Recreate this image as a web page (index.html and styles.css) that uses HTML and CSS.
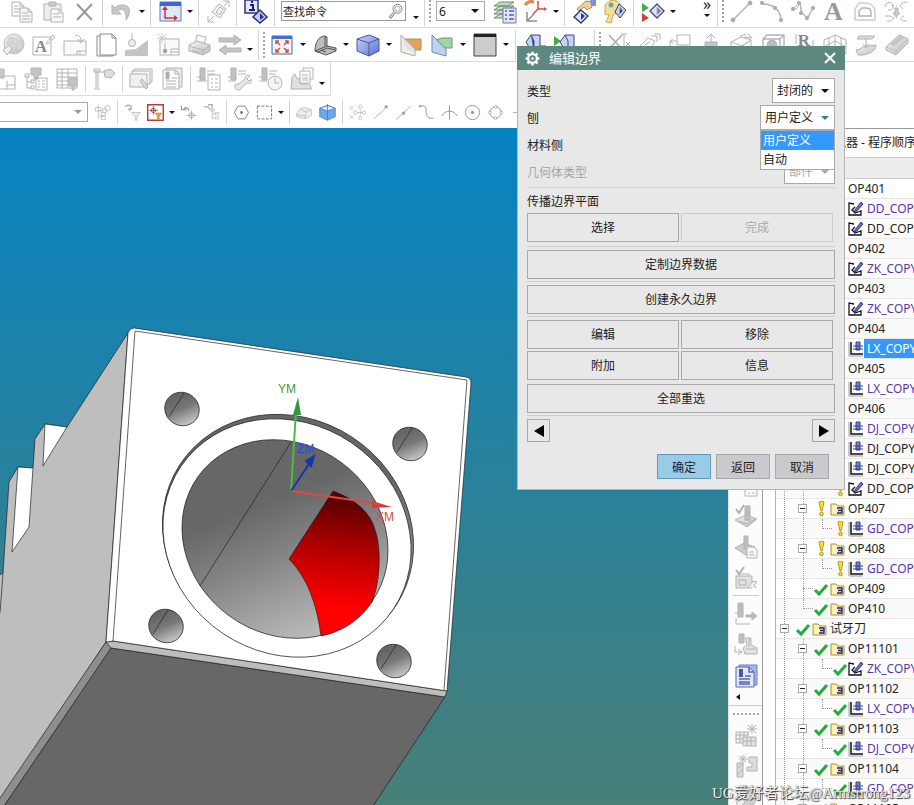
FILE: index.html
```html
<!DOCTYPE html>
<html lang="zh-CN">
<head>
    <meta charset="UTF-8">
    <title>编辑边界</title>
    <link rel="stylesheet" href="styles.css">
</head>
<body>
    <!-- icon set -->
    <svg class="sprite" aria-hidden="true">
        <defs>
            <linearGradient id="blueFill" x1="0" y1="0" x2="1" y2="1"><stop offset="0" stop-color="#cdd6fb"/><stop offset="1" stop-color="#5a6fd0"/></linearGradient>
            <linearGradient id="greyFill" x1="0" y1="0" x2="1" y2="1"><stop offset="0" stop-color="#f6f6f6"/><stop offset="1" stop-color="#bcbcbc"/></linearGradient>
        </defs>
        <symbol id="copy" viewBox="0 0 24 24"><path d="M2 2h8l4 4v10H2z" fill="#fafafa"/><path d="M10 2v4h4M4 6h4M4 9h6M4 12h6"/><path d="M10 8h8l4 4v10H10z" fill="#f6f6f6"/><path d="M18 8v4h4M12 13h6M12 16h8M12 19h8"/></symbol>
        <symbol id="paste" viewBox="0 0 24 24"><path d="M3 4h17v16H3z" fill="#eee"/><path d="M8 2h7v4H8z" fill="#ccc"/><path d="M10 9h8l4 4v9H10z" fill="#fafafa"/><path d="M18 9v4h4M12 14h6M12 17h8"/></symbol>
        <symbol id="delete" viewBox="0 0 24 24"><path d="M5 4l15 16M20 4L5 20" stroke="#999" stroke-width="2"/></symbol>
        <symbol id="undo" viewBox="0 0 24 24"><path d="M2 5v9h9L8 11c4-4 9-1 8 9 6-8 4-16-4-15-3 0-5 1-7 3z" fill="#c8c8c8"/></symbol>
        <symbol id="csys" viewBox="0 0 24 24"><path d="M2 2h21v19H2z" fill="#dfe7fb" stroke="#5778c0"/><path d="M2 2h21v4H2z" fill="#3f68cf" stroke="none"/><path d="M7 8v10h11" stroke="#c23a2c" stroke-width="1.5"/><path d="M4 10l3-4 3 4zM16 15l4 3-4 3z" fill="#c23a2c" stroke="none"/></symbol>
        <symbol id="rotate" viewBox="0 0 24 24"><path d="M6 12l7-8 7 5-6 9z" fill="#f4f4f4"/><path d="M10 12l4-5 3 2-3 6zM2 16v6h6M3 21l5-5M17 1h6v6M22 2l-4 4"/></symbol>
        <symbol id="info" viewBox="0 0 24 24"><path d="M1 0h13v13H1z" fill="#e4e6fb" stroke="#2b3380" stroke-width="1.5"/><path d="M6 5h3v5M5 10h6M7 2h2" stroke="#1a2266" stroke-width="2"/><path d="M16 10l7 7-7 6-7-6z" fill="#c6cdf4" stroke="#2b3380" stroke-width="1.5"/><path d="M16 13l4 4-4 3z" fill="#2b3380" stroke="none"/></symbol>
        <symbol id="loupe" viewBox="0 0 24 24"><circle cx="14" cy="9" r="6" fill="#fff" stroke="#555"/><circle cx="14" cy="9" r="3.5" stroke="#888"/><path d="M9 13l-6 7 2 2 6-7" stroke="#555" fill="#ddd"/></symbol>
        <symbol id="layers" viewBox="0 0 24 24"><path d="M1 18l6-4h14l-6 4zM1 14l6-4h14l-6 4zM1 10l6-4h14l-6 4zM1 6l6-4h14l-6 4z" fill="#c6dcc2" stroke="#6f8a72"/><path d="M10 8h13v15H10z" fill="#e3e6fb" stroke="#6a74bb"/><path d="M12 11h2M16 11h5M12 15h2M16 15h5M12 19h2M16 19h5" stroke="#5560ac" stroke-width="1.6"/></symbol>
        <symbol id="axes" viewBox="0 0 24 24"><path d="M14 1v8h8M14 9l-5 5" stroke="#cb5349" stroke-width="1.5"/><path d="M1 5c3-4 6-4 9-3" stroke="#e88842" stroke-width="3"/><path d="M3 12v9h10M3 21l7-7" stroke="#8d8d8d" stroke-width="1.5"/><path d="M20 7l3 2-3 2z" fill="#cb5349" stroke="none"/></symbol>
        <symbol id="hand" viewBox="0 0 24 24"><path d="M5 9l9-8 6 1v5l-5 3-3-3-5 4z" fill="#f3cf9a" stroke="#b38755"/><path d="M18 0h6v6h-5z" fill="#8290d8" stroke="none"/><path d="M9 10l7 6-7 7-7-6z" fill="#dce0f9" stroke="#303a78" stroke-width="1.4"/><path d="M9 13l4 3-4 4z" fill="#303a78" stroke="none"/></symbol>
        <symbol id="face" viewBox="0 0 24 24"><path d="M2 6c3-8 14-7 16 0l-3 6-5 3-2 8-5-1 3-7-4-1z" fill="#f7de96" stroke="#c9a955"/><circle cx="8" cy="5" r="2.5" fill="#5aa9bd" stroke="none"/><path d="M16 4l7 6-6 8-5-6z" fill="#c8cff2" stroke="#353d7a"/><path d="M17 7l3 4-4 4z" fill="#353d7a"/></symbol>
        <symbol id="verify" viewBox="0 0 24 24"><path d="M1 3l7 5-7 4z" fill="#3fae49" stroke="none"/><path d="M1 13l7 5-7 4z" fill="#cc4539" stroke="none"/><path d="M16 4l7 7-7 7-7-7z" fill="#dfe2f8" stroke="#495285" stroke-width="1.4"/><path d="M16 7l4 4-4 4z" fill="#6b76b8"/></symbol>
        <symbol id="line" viewBox="0 0 24 24"><path d="M4 20L20 4" stroke-width="1.4"/><circle cx="4" cy="20" r="2" fill="#aaa"/><circle cx="21" cy="3" r="2" fill="#aaa"/></symbol>
        <symbol id="arc" viewBox="0 0 24 24"><path d="M2 4c12 0 18 5 19 16" stroke-width="1.4"/><circle cx="2" cy="3" r="1.7" fill="#aaa"/><circle cx="15" cy="8" r="1.7" fill="#aaa"/><circle cx="21" cy="20" r="1.7" fill="#aaa"/></symbol>
        <symbol id="spline" viewBox="0 0 24 24"><path d="M2 9c5 2 6-6 7-6s0 10 2 10 3 5 5 5 4-6 6-10M2 9l7-7 2 11 5 4 6-8"/><circle cx="2" cy="9" r="1.7" fill="#aaa"/><circle cx="8" cy="3" r="1.7" fill="#aaa"/><circle cx="10" cy="13" r="1.7" fill="#aaa"/><circle cx="16" cy="18" r="1.7" fill="#aaa"/><circle cx="22" cy="8" r="1.7" fill="#aaa"/></symbol>
        <symbol id="offset" viewBox="0 0 24 24"><path d="M6 3h7c5 0 9 4 9 9v8H2V9z"/><path d="M9 8h4c3 0 5 2 5 5v3H6v-5z" stroke-width="1.4"/></symbol>
        <symbol id="bridge" viewBox="0 0 24 24"><path d="M1 7c0-6 8-6 8 0 0 3-3 3-5 3M23 2c-6 0-9 4-4 7M1 16h5c6 1 3 6-3 5M23 21c-7 1-8-3-3-5"/><path d="M9 6h6M9 18h6" stroke-dasharray="1 2"/><path d="M11 8h3v5h2l-4 4-3-4h2z" fill="#ccc"/></symbol>
        <symbol id="globe" viewBox="0 0 24 24"><circle cx="13" cy="11" r="10" fill="url(#greyFill)" stroke="#c4c4c4"/><path d="M8 4l6 2-3 5-6-1M15 10l6-2v7l-5 3z" fill="#d6d6d6" stroke="#ccc"/><path d="M2 17l6-5 3 4-5 6z" fill="#eee"/></symbol>
        <symbol id="sheet" viewBox="0 0 24 24"><path d="M1 8h22v14H1z" fill="#fafafa"/><path d="M14 18h9M17 18v4M14 18v4M12 3c4-2 6 1 6 5M15 6l3 4 3-4" /></symbol>
        <symbol id="pages" viewBox="0 0 24 24"><path d="M6 1h12l4 4v17H6z" fill="#fff" stroke="#888"/><path d="M18 1v4h4M6 3H3v20h16v-1" stroke="#888"/></symbol>
        <symbol id="slope" viewBox="0 0 24 24"><path d="M0 23V17l11-1 12-9v16z" fill="#c3c3c3" stroke="none"/><path d="M7 0v7"/><circle cx="7" cy="10" r="3.5" fill="#eee"/></symbol>
        <symbol id="newsheet" viewBox="0 0 24 24"><path d="M4 6h19v16H4z" fill="#fafafa"/><path d="M15 16h8M15 19h8M15 16v6M9 10v8" /><circle cx="9" cy="18" r="2" fill="#999"/><path d="M6 0v10M1 5h10M2 1l8 8M10 1L2 9" stroke="#ccc"/></symbol>
        <symbol id="printer" viewBox="0 0 24 24"><path d="M8 10l2-8 9 2-2 8z" fill="#fafafa"/><path d="M2 12l8-4 13 4v6l-7 4-14-4z" fill="url(#greyFill)"/><path d="M2 13l14 4 7-4M16 17v5M5 17l8 3"/></symbol>
        <symbol id="swap" viewBox="0 0 24 24"><path d="M1 5h15V2l7 5-7 5V9H1zM23 15H8v-3l-7 5 7 5v-3h15z" fill="#c4c4c4"/></symbol>
        <symbol id="fit" viewBox="0 0 24 24"><path d="M2 3h20v18H2z" fill="#f1f4fd" stroke="#4863a2"/><path d="M2 3h20v3H2z" fill="#4670c8" stroke="none"/><path d="M10 12L6 8M14 12l4-4M10 15l-4 4M14 15l4 4M6 11V8h3M15 8h3v3M6 16v3h3M15 19h3v-3" stroke="#d1502e" stroke-width="1.5"/></symbol>
        <symbol id="datum" viewBox="0 0 24 24"><path d="M2 18C2 9 6 3 12 3l2 1v9l9 2v3l-10 4z" fill="#bdbdbd" stroke="#555"/><path d="M2 18l12-5M2 18l3 1 9-4 9 2M8 17l5 2M12 3v10" stroke="#555"/></symbol>
        <symbol id="cube" viewBox="0 0 24 24"><path d="M1 6l12-4 10 4v12l-10 5-12-5z" fill="url(#blueFill)" stroke="#4656ae"/><path d="M1 6l12 4 10-4M13 10v13" stroke="#4656ae"/></symbol>
        <symbol id="clip" viewBox="0 0 24 24"><path d="M4 6h18v11H9z" fill="#e2a45d" stroke="#c08c50"/><path d="M2 2l14 14v7L2 19z" fill="#ebebeb" fill-opacity=".85" stroke="#aaa"/></symbol>
        <symbol id="section" viewBox="0 0 24 24"><path d="M6 7l6-2h10v10H12z" fill="#9fd5a2" stroke="#65a068"/><path d="M2 2l14 14v7L2 19z" fill="#b9cdf3" fill-opacity=".9" stroke="#7486b8"/></symbol>
        <symbol id="window" viewBox="0 0 24 24"><path d="M1 1h22v22H1z" fill="#ccc" stroke="#444"/><path d="M1 1h22v3H1z" fill="#222" stroke="none"/></symbol>
        <symbol id="slab" viewBox="0 0 24 24"><path d="M3 9l5-7h9v16l-6 4z" fill="#c8d2f4" stroke="#39457f"/><path d="M8 2l3 6v14M16 13h7l-4 6z" fill="#4555ac" stroke="#39457f"/></symbol>
        <symbol id="slabgo" viewBox="0 0 24 24"><path d="M0 3l7 5-7 5z" fill="#3fae49" stroke="none"/><path d="M6 9l5-7h9v16l-6 4z" fill="#c8d2f4" stroke="#39457f"/><path d="M11 2l3 6v14" stroke="#39457f"/></symbol>
        <symbol id="trim" viewBox="0 0 24 24"><path d="M3 2l13 14M16 2L3 16" stroke-width="1.8"/><path d="M18 1v19M15 1h6M20 9l4 4M24 9l-4 4"/></symbol>
        <symbol id="facemove" viewBox="0 0 24 24"><path d="M2 14l9-9 7 3-7 11zM8 12l5-3M14 3h6v6M17 1h6v6"/></symbol>
        <symbol id="box" viewBox="0 0 24 24"><path d="M9 2h13v10H9zM9 8H2v6M2 8l3-2M2 8l3 3"/></symbol>
        <symbol id="pull" viewBox="0 0 24 24"><path d="M6 9h12v12H6z" fill="#c4c4c4"/><path d="M12 9V1M8 5l4-4 4 4"/></symbol>
        <symbol id="solid" viewBox="0 0 24 24"><path d="M1 9l10-5 10 3-9 6zM1 9v7l11 5v-8M12 13l9-6v8M10 3l6-2M14 4l8 1M18 1l4 4"/></symbol>
        <symbol id="frame" viewBox="0 0 24 24"><path d="M2 6h17v16H2zM2 6l4-4h17v15l-4 5M19 6l4-4" stroke-width="1.4"/><circle cx="11" cy="12" r="5" fill="#bbb"/></symbol>
        <symbol id="grid3d" viewBox="0 0 24 24"><path d="M1 7l11-5 11 5M1 7v14l11-6 11 6V7M12 2v13M1 14l11-6 11 6M6 5v14M18 5v14"/></symbol>
        <symbol id="offsetface" viewBox="0 0 24 24"><path d="M2 17c6 0 6-5 12-4l8-1c0 6-8 11-18 10z" fill="url(#greyFill)"/><path d="M5 3h16l-3 3H3z" fill="#ddd"/><path d="M12 5v9M9 11l3 4 3-4"/></symbol>
        <symbol id="slabgrey" viewBox="0 0 24 24"><path d="M1 14L14 2l9 4v4L11 22 1 17z" fill="url(#greyFill)"/><path d="M1 14l10 4L23 6M11 18v4" stroke="#bbb"/><path d="M5 11L16 2l4 2L9 13z" fill="#c4c4c4" stroke="none"/></symbol>
        <symbol id="opcard" viewBox="0 0 24 24"><path d="M6 9h16v13H6zM14 18h8M14 14v8"/><path d="M2 2h9v9H2z" fill="#c9c9c9"/></symbol>
        <symbol id="optree" viewBox="0 0 24 24"><path d="M7 1h10v7h-3v4h-4V8H7z" fill="#c4c4c4"/><path d="M12 11h11v12H12zM14 14h2M18 14h3M14 17h2M18 17h3M14 20h2M18 20h3M3 9v12h4M3 15h4M1 7h4v3H1zM7 13h3v3H7zM7 19h3v3H7z"/></symbol>
        <symbol id="optable" viewBox="0 0 24 24"><path d="M2 2h20v19H2zM2 6h20M2 10h20M2 14h20M2 18h20M7 2v19M13 2v19"/><path d="M14 11h8v8h-3v4h-2v-4h-3z" fill="#c4c4c4"/></symbol>
        <symbol id="signal" viewBox="0 0 24 24"><path d="M4 3v18M6 3v18M2 22h6M2 2h6v3H2zM8 5h4"/><path d="M12 4l6-2 5 4-4 5-6-1z" fill="#dedede"/></symbol>
        <symbol id="sheets" viewBox="0 0 24 24"><path d="M5 2h18v13H5z" fill="#fafafa"/><path d="M3 4h18v13H3z" fill="#f6f6f6"/><path d="M1 7h17v13H1z" fill="#f0f0f0"/><path d="M11 14l6 8 2-2-6-8z" fill="#ddd"/></symbol>
        <symbol id="report" viewBox="0 0 24 24"><path d="M6 1h16v19H6z" fill="#eaeaea"/><path d="M3 3h12l4 4v15H3z" fill="#fafafa"/><path d="M15 3v4h4M6 14h10M6 17h10M6 20h10M12 11h5"/><path d="M6 5h3v7H6z" fill="#aaa"/></symbol>
        <symbol id="toollist" viewBox="0 0 24 24"><path d="M3 1h5v12H3z" fill="#c0c0c0"/><path d="M10 4h8M10 7h8M0 10h3M0 14h10M11 8h12v15H11zM14 12h2M18 12h3M14 16h2M18 16h3M14 20h2M18 20h3"/></symbol>
        <symbol id="toolwrench" viewBox="0 0 24 24"><path d="M3 1h5v12H3z" fill="#c0c0c0"/><path d="M10 4h8M10 7h8M0 10h3M0 14h8"/><path d="M8 22c-3-3 0-6 3-5l6-5c0-4 4-5 5-3l-3 3 2 2 3-2c0 4-3 5-5 4l-6 5c0 2-3 3-5 1z" fill="#e8e8e8"/></symbol>
        <symbol id="toolclock" viewBox="0 0 24 24"><path d="M3 1h5v12H3z" fill="#c0c0c0"/><path d="M10 4h8M10 7h6M0 10h3M0 14h8"/><circle cx="16" cy="16" r="7" fill="#f4f4f4"/><path d="M16 11v5h4"/></symbol>
        <symbol id="shopdoc" viewBox="0 0 24 24"><path d="M2 10l3-3 2 5 3-1v6h9l3 5H1z" fill="#e0e0e0"/><path d="M13 1h10v11H13z" fill="#fff"/><path d="M10 4h10v12H10z" fill="#fafafa"/><path d="M12 8h6M12 11h6M12 13h6"/></symbol>
        <symbol id="navfind" viewBox="0 0 24 24"><path d="M6 1v20M6 9h7M6 17h7M2 5h8v5H2zM10 12h6v4h-6zM10 18h6v4h-6z"/><circle cx="19" cy="6" r="4"/><circle cx="15" cy="9" r="3"/></symbol>
        <symbol id="funnel" viewBox="0 0 24 24"><path d="M2 4c3-4 10-2 8 3H6M10 7l-3 3" stroke-width="2"/><path d="M11 12h12l-5 6v5h-2v-5z" fill="#eee"/></symbol>
        <symbol id="selfilter" viewBox="0 0 24 24"><path d="M1 1h22v22H1z" fill="#fff" stroke="#b43a3a" stroke-width="2"/><circle cx="9" cy="9" r="3" stroke="#7c2525"/><path d="M9 3v12M3 9h12" stroke="#7c2525"/><path d="M12 13h9l-4 4v4h-2v-4z" fill="#f2a93c" stroke="#b97717"/></symbol>
        <symbol id="undosel" viewBox="0 0 24 24"><path d="M2 2v6h6L6 6c3-2 7 0 6 4" stroke="#999" stroke-width="1.6"/><circle cx="16" cy="16" r="3.5" stroke="#999"/><path d="M16 9v14M9 16h14" stroke="#999"/></symbol>
        <symbol id="toptree" viewBox="0 0 24 24"><path d="M1 4h6l3 4M7 1h6v5" stroke-width="2"/><path d="M13 8v14M13 14h4M13 20h4M11 7h5v3h-5zM17 12h5v3h-5zM17 18h5v3h-5z"/></symbol>
        <symbol id="hexagon" viewBox="0 0 24 24"><path d="M7 3h10l5 9-5 9H7l-5-9z" stroke="#888" stroke-width="1.4"/><circle cx="12" cy="12" r="2" fill="#777" stroke="none"/></symbol>
        <symbol id="marquee" viewBox="0 0 24 24"><path d="M2 3h20v18H2z" stroke="#777" stroke-width="1.4" stroke-dasharray="4 2"/></symbol>
        <symbol id="body" viewBox="0 0 24 24"><path d="M1 15c2-7 6-10 12-10l9 3v8l-9 5-12-3z" fill="#eee"/><path d="M1 15l12 2c0-5 3-8 9-9M13 17v4M7 8l9 4"/></symbol>
        <symbol id="cubecut" viewBox="0 0 24 24"><path d="M1 6l11-4 11 4v12l-11 5-11-5z" fill="#6ea8ec" stroke="#4772b4"/><path d="M1 6l11 4 11-4-11-4z" fill="#d8ecfb" stroke="#4772b4"/><path d="M12 10v13" stroke="#4772b4"/><path d="M12 0v10" stroke="#d03838"/></symbol>
        <symbol id="points" viewBox="0 0 24 24"><path d="M1 3l5 5M6 3L1 8M1 16l5 5M6 16l-5 5M12 12h8M16 8v8"/><circle cx="16" cy="4" r="2.5"/><circle cx="9" cy="12" r="2.500"/><circle cx="16" cy="20" r="2.500"/><circle cx="21" cy="12" r="2.500"/></symbol>
        <symbol id="endpoint" viewBox="0 0 24 24"><path d="M3 21L20 5" stroke-width="1.4"/><circle cx="20" cy="4" r="2" fill="#999"/></symbol>
        <symbol id="midpoint" viewBox="0 0 24 24"><path d="M2 22L22 3" stroke-width="1.4"/><circle cx="12" cy="13" r="2" fill="#999"/></symbol>
        <symbol id="control" viewBox="0 0 24 24"><path d="M3 3c12-2 7 6 9 11 1 6 5 7 10 6" stroke="#999" stroke-width="1.4"/><circle cx="3" cy="3" r="1.5" fill="#999"/></symbol>
        <symbol id="intersect" viewBox="0 0 24 24"><path d="M12 2v20M1 17c5-9 17-9 22 0" stroke="#999" stroke-width="1.4"/></symbol>
        <symbol id="center" viewBox="0 0 24 24"><circle cx="12" cy="12" r="10" stroke="#999" stroke-width="1.4"/><circle cx="12" cy="12" r="2" fill="#888"/></symbol>
        <symbol id="quadrant" viewBox="0 0 24 24"><circle cx="12" cy="12" r="8" stroke="#999" stroke-width="1.4"/><g fill="#fff" stroke="#999"><circle cx="12" cy="4" r="2"/><circle cx="4" cy="12" r="2"/><circle cx="20" cy="12" r="2"/><circle cx="12" cy="20" r="2"/></g></symbol>
        <symbol id="plus" viewBox="0 0 24 24"><path d="M4 12h16M12 4v16" stroke-width="1.4"/></symbol>
        <symbol id="gear" viewBox="0 0 24 24"><circle cx="12" cy="12" r="7" stroke="#fff" stroke-width="3.500"/><circle cx="12" cy="12" r="2" fill="#fff" stroke="none"/><path d="M12 1v4M12 19v4M1 12h4M19 12h4M4 4l3 3M17 17l3 3M20 4l-3 3M7 17l-3 3" stroke="#fff" stroke-width="4"/></symbol>
        <symbol id="verifypath" viewBox="0 0 24 24"><path d="M2 5l3 4 5-8" stroke-width="2"/><path d="M1 16l11-5 11 4-10 8z" fill="url(#greyFill)"/><path d="M11 2h5v14h-5z" fill="#c0c0c0"/><path d="M11 5h5M11 8h5M11 11h5M4 17l9 3 8-5"/></symbol>
        <symbol id="listpath" viewBox="0 0 24 24"><path d="M1 13l9-5 11 4-9 8z" fill="#ccc"/><path d="M10 1h4v13h-4z" fill="#c0c0c0"/><path d="M13 12h7l3 3v8H13z" fill="#fafafa"/><path d="M15 17h5M15 20h6M10 4h4M10 7h4"/></symbol>
        <symbol id="machine" viewBox="0 0 24 24"><path d="M2 4l3 4 5-7" stroke-width="2"/><path d="M2 10h16v12H2z" fill="#e2e2e2"/><path d="M5 10V8h10v2M5 14h7v5H5z"/><path d="M14 21l5-6 4 1-3 3 2 3" fill="#eee"/></symbol>
        <symbol id="post" viewBox="0 0 24 24"><path d="M4 1h5v14H4z" fill="#c0c0c0"/><path d="M4 4h5M4 7h5M4 10h5M1 11h3M2 16v6h14"/><path d="M12 13h6v-3l5 4-5 4v-3h-6z" fill="#bbb"/></symbol>
        <symbol id="postmachine" viewBox="0 0 24 24"><path d="M5 1h5v9H5z" fill="#c0c0c0"/><path d="M11 5h6v7l6 3v6H11l-2-6 4-3z" fill="#e2e2e2"/><path d="M1 13v6h6M4 16l4 3-4 3M12 16h9M15 5v9"/></symbol>
        <symbol id="docblue" viewBox="0 0 24 24"><path d="M5 1h18v20H5z" fill="#aab4ea" stroke="#7180c4"/><path d="M2 3h13l5 5v15H2z" fill="#e3e7fd" stroke="#5765ac"/><path d="M15 3v5h5M5 15h11M5 18h11M5 20h11M11 12h6" stroke="#5765ac" stroke-width="1.5"/><path d="M5 5h4v8H5z" fill="#4858a8" stroke="none"/></symbol>
        <symbol id="meshnew" viewBox="0 0 24 24"><path d="M2 8h12v11H2z" fill="#eee"/><path d="M9 13h13v9H9z" fill="#e2e2e2"/><path d="M2 11h12M2 15h7M6 8v11M10 8v5M13 13v9M17 13v9M9 17h13M18 0v10M13 5h10M14 1l8 8M22 1l-8 8"/></symbol>
        <symbol id="toolnew" viewBox="0 0 24 24"><path d="M3 8h6v14H3z" fill="#d9d9d9"/><path d="M15 2h8v14H13v-4h5V8h-3z" fill="#ddd"/><path d="M9 0v9M5 4h9M6 1l6 6M12 1L6 7M3 20l6-6M3 14l6-5"/></symbol>
        <symbol id="ok" viewBox="0 0 16 16"><path d="M2 9l4 4 8-9" stroke="#1fae3c" stroke-width="3"/></symbol>
        <symbol id="warn" viewBox="0 0 16 16"><path d="M6 1c1-1 4-1 5 0l-2 9H8z" fill="#ffdf1f" stroke="#b9931a"/><circle cx="8.5" cy="13" r="1.8" fill="#ffdf1f" stroke="#b9931a"/></symbol>
        <symbol id="folder" viewBox="0 0 16 16"><path d="M1 3h5l2 2h6v9H1z" fill="#fff0b5" stroke="#a68c40"/><path d="M7 7h5v5H7M8 9.5h4" stroke="#23236b" stroke-width="1.4"/></symbol>
        <symbol id="mill" viewBox="0 0 16 16"><path d="M6 3L1 2v12h12v-4l-3 1-3 1-3-3 3-3" stroke="#111" stroke-width="1.3" fill="#fff"/><path d="M7 9l6-8 2 2-6 7-3 1z" fill="#6371cc" stroke="#354089"/></symbol>
        <symbol id="turn" viewBox="0 0 16 16"><path d="M1 1v14h14" stroke="#999"/><path d="M3 1v12h12" stroke="#111" stroke-width="1.5"/><path d="M8 1h4v8H8z" fill="#7080d8" stroke="#37428e"/><path d="M5 5h10M5 8h10" stroke="#37428e"/></symbol>
    </svg>

    <div class="app">
        <header class="toolbars">
            <div class="bar bar-standard">
                <button class="tool"><svg><use href="#copy"/></svg></button>
                <button class="tool"><svg><use href="#paste"/></svg></button>
                <button class="tool"><svg><use href="#delete"/></svg></button>
                <span class="sep"></span>
                <button class="tool"><svg><use href="#undo"/></svg></button>
                <button class="drop"></button>
                <span class="sep"></span>
                <button class="tool"><svg><use href="#csys"/></svg></button>
                <button class="drop"></button>
                <span class="sep"></span>
                <button class="tool"><svg><use href="#rotate"/></svg></button>
                <span class="sep"></span>
                <button class="tool"><svg><use href="#info"/></svg></button>
                <span class="sep"></span>
                <div class="search">
                    <input type="text" value="查找命令" aria-label="查找命令">
                    <svg><use href="#loupe"/></svg>
                </div>
                <button class="drop low"></button>
                <span class="sep"></span>
                <span class="grip"></span>
                <div class="pick layer-pick">
                    <select aria-label="工作图层"><option>6</option></select>
                </div>
                <button class="tool"><svg><use href="#layers"/></svg></button>
                <button class="tool"><svg><use href="#axes"/></svg></button>
                <button class="drop"></button>
                <span class="sep"></span>
                <button class="tool"><svg><use href="#hand"/></svg></button>
                <button class="tool"><svg><use href="#face"/></svg></button>
                <span class="sep"></span>
                <button class="tool"><svg><use href="#verify"/></svg></button>
                <button class="drop"></button>
                <button class="more">»</button>
                <span class="sep"></span>
                <span class="grip"></span>
                <button class="tool"><svg><use href="#line"/></svg></button>
                <button class="tool"><svg><use href="#arc"/></svg></button>
                <button class="tool"><svg><use href="#spline"/></svg></button>
                <button class="tool letter">A</button>
                <button class="tool"><svg><use href="#offset"/></svg></button>
                <button class="tool"><svg><use href="#bridge"/></svg></button>
            </div>

            <div class="bar bar-view">
                <button class="tool"><svg><use href="#globe"/></svg></button>
                <button class="tool"><svg class="line-icon" viewBox="0 0 24 24"><path d="M1 4h18v18H1z"/><text x="9" y="19" text-anchor="middle">A</text><path d="M14 10l7-8 2 2-7 7z"/></svg></button>
                <button class="tool"><svg><use href="#sheet"/></svg></button>
                <button class="tool"><svg><use href="#pages"/></svg></button>
                <button class="tool"><svg><use href="#slope"/></svg></button>
                <button class="tool"><svg><use href="#newsheet"/></svg></button>
                <button class="tool"><svg><use href="#printer"/></svg></button>
                <button class="tool"><svg><use href="#swap"/></svg></button>
                <button class="drop low"></button>
                <span class="sep"></span>
                <span class="grip"></span>
                <button class="tool"><svg><use href="#fit"/></svg></button>
                <button class="drop wide"></button>
                <button class="tool"><svg><use href="#datum"/></svg></button>
                <button class="drop wide"></button>
                <button class="tool"><svg><use href="#cube"/></svg></button>
                <button class="drop wide"></button>
                <button class="tool"><svg><use href="#clip"/></svg></button>
                <button class="tool"><svg><use href="#section"/></svg></button>
                <button class="drop wide"></button>
                <button class="tool"><svg><use href="#window"/></svg></button>
                <button class="drop wide"></button>
                <span class="sep"></span>
                <button class="tool"><svg><use href="#slab"/></svg></button>
                <button class="tool"><svg><use href="#slabgo"/></svg></button>
                <button class="drop low"></button>
                <span class="sep"></span>
                <span class="grip"></span>
                <button class="tool"><svg><use href="#trim"/></svg></button>
                <button class="tool"><svg><use href="#facemove"/></svg></button>
                <button class="tool"><svg><use href="#box"/></svg></button>
                <button class="tool"><svg><use href="#pull"/></svg></button>
                <button class="tool"><svg><use href="#solid"/></svg></button>
                <button class="tool"><svg><use href="#frame"/></svg></button>
                <button class="tool"><svg class="line-icon" viewBox="0 0 24 24"><path d="M4 1v10M21 7v9c0 3-4 3-5 2"/><text x="12" y="13" text-anchor="middle">R</text></svg></button>
                <button class="tool"><svg><use href="#grid3d"/></svg></button>
                <button class="tool"><svg><use href="#offsetface"/></svg></button>
                <button class="tool"><svg><use href="#slabgrey"/></svg></button>
            </div>

            <div class="bar bar-operation">
                <button class="tool"><svg><use href="#opcard"/></svg></button>
                <button class="tool"><svg><use href="#optree"/></svg></button>
                <button class="tool"><svg><use href="#optable"/></svg></button>
                <span class="sep"></span>
                <button class="tool"><svg><use href="#signal"/></svg></button>
                <span class="sep"></span>
                <button class="tool"><svg><use href="#sheets"/></svg></button>
                <button class="tool"><svg><use href="#report"/></svg></button>
                <span class="sep"></span>
                <button class="tool"><svg><use href="#toollist"/></svg></button>
                <button class="tool"><svg><use href="#toolwrench"/></svg></button>
                <button class="tool"><svg><use href="#toolclock"/></svg></button>
                <button class="tool"><svg><use href="#shopdoc"/></svg></button>
                <button class="drop low"></button>
            </div>

            <div class="bar bar-selection">
                <div class="pick filter-pick">
                    <select aria-label="选择过滤器"><option></option></select>
                </div>
                <button class="tool"><svg><use href="#navfind"/></svg></button>
                <span class="sep"></span>
                <button class="tool"><svg><use href="#funnel"/></svg></button>
                <button class="tool"><svg><use href="#selfilter"/></svg></button>
                <button class="drop"></button>
                <button class="tool"><svg><use href="#undosel"/></svg></button>
                <button class="tool"><svg><use href="#toptree"/></svg></button>
                <span class="sep"></span>
                <button class="tool"><svg><use href="#hexagon"/></svg></button>
                <button class="tool"><svg><use href="#marquee"/></svg></button>
                <button class="drop"></button>
                <span class="sep"></span>
                <button class="tool"><svg><use href="#body"/></svg></button>
                <button class="tool"><svg><use href="#cubecut"/></svg></button>
                <span class="sep"></span>
                <button class="tool"><svg><use href="#points"/></svg></button>
                <button class="tool"><svg><use href="#endpoint"/></svg></button>
                <button class="tool"><svg><use href="#midpoint"/></svg></button>
                <button class="tool"><svg><use href="#control"/></svg></button>
                <button class="tool"><svg><use href="#intersect"/></svg></button>
                <button class="tool"><svg><use href="#center"/></svg></button>
                <button class="tool"><svg><use href="#quadrant"/></svg></button>
                <button class="tool"><svg><use href="#plus"/></svg></button>
            </div>
        </header>

        <main class="workspace">
            <div class="viewport">
                <svg class="model" viewBox="0 128 728 677" preserveAspectRatio="xMinYMin slice">
                    <defs>
                        <linearGradient id="bore" gradientUnits="userSpaceOnUse" x1="248" y1="520" x2="385" y2="606"><stop offset="0" stop-color="#676767"/><stop offset=".35" stop-color="#858585"/><stop offset="1" stop-color="#c6c6c6"/></linearGradient>
                        <linearGradient id="cut" gradientUnits="userSpaceOnUse" x1="335" y1="495" x2="322" y2="605"><stop offset="0" stop-color="#560000"/><stop offset=".5" stop-color="#b40000"/><stop offset="1" stop-color="#ff0000"/></linearGradient>
                        <linearGradient id="hole" x1=".2" y1=".3" x2=".9" y2=".8"><stop offset="0" stop-color="#666"/><stop offset=".4" stop-color="#777"/><stop offset="1" stop-color="#c8c8c8"/></linearGradient>
                        <linearGradient id="rim" x1="0" y1="0" x2="1" y2="1"><stop offset=".4" stop-color="#666"/><stop offset="1" stop-color="#c4c4c4"/></linearGradient>
                        <g id="bolt">
                            <ellipse rx="17.5" ry="16.5" transform="rotate(30)" fill="url(#hole)"/>
                            <path d="M2-16l-15 24"/>
                        </g>
                    </defs>
                    <g stroke="#222" stroke-width=".7" stroke-linejoin="round" fill="none">
                        <!-- side face and the two lugs -->
                        <path d="M128 333L67 427 45 424 35 439 33 468 18 467 9 482 3 573-2 576V805L106 642z" fill="#bebebe"/>
                        <path d="M45 424l22 3-24 39zM18 467l15 1-4 59-17 25z" fill="#fff"/>
                        <path d="M3 573L0 613"/>
                        <!-- bottom face -->
                        <path d="M106 642L-2 801v14l114-167z" fill="#8e8e8e"/>
                        <path d="M111 648l334 49-78 118H-2z" fill="#676767"/>
                        <path d="M106 642l7-1 334 50-2 6-334-49z" fill="#bdbdbd"/>
                        <!-- front face -->
                        <path d="M128 333q2-5 6-5l332 49q5 1 5 6l-24 308-334-50-7 1z" fill="#fff"/>
                        <path d="M113 641l22-310 332 49-23 310"/>
                        <ellipse cx="288" cy="535" rx="129" ry="117" transform="rotate(33 288 535)" fill="url(#rim)"/>
                        <ellipse cx="287" cy="538" rx="128" ry="115" transform="rotate(34 287 538)" fill="#fff"/>
                        <ellipse cx="285" cy="539" rx="107" ry="95" transform="rotate(36 285 539)" fill="url(#bore)"/>
                        <path d="M291 442l-91 144"/>
                        <path d="M333 491c22 8 38 22 42 39 6 15 6 50-3 72-12 18-30 30-51 34-4-32-14-59-32-77z" fill="url(#cut)"/>
                        <use href="#bolt" x="182" y="409"/>
                        <use href="#bolt" x="410" y="444"/>
                        <use href="#bolt" x="166" y="626"/>
                        <use href="#bolt" x="394" y="661"/>
                    </g>
                    <!-- machine coordinate system -->
                    <g stroke-width="2">
                        <path d="M291 491l5-80" stroke="#4cb94c"/>
                        <path d="M298 397l-5 18h8z" fill="#2f9a3c"/>
                        <path d="M291 491l18-27" stroke="#1636a8"/>
                        <path d="M314 456l-8 5 5 5z" fill="#1636a8" stroke="#1636a8"/>
                        <path d="M291 491l82 12" stroke="#e04848"/>
                        <path d="M392 507l-20-6v7z" fill="#d83c3c"/>
                    </g>
                    <text x="278" y="393" class="axis axis-y">YM</text>
                    <text x="297" y="453" class="axis axis-z">ZM</text>
                    <text x="376" y="521" class="axis axis-x">XM</text>
                </svg>
            </div>

            <aside class="sidebar">
                <button class="tool"><svg><use href="#opcard"/></svg></button>
                <button class="tool"><svg><use href="#toollist"/></svg></button>
                <button class="tool"><svg><use href="#optree"/></svg></button>
                <button class="tool"><svg><use href="#optable"/></svg></button>
                <button class="tool"><svg><use href="#sheets"/></svg></button>
                <button class="tool"><svg><use href="#toolwrench"/></svg></button>
                <button class="tool"><svg><use href="#toolclock"/></svg></button>
                <button class="tool"><svg><use href="#post"/></svg></button>
                <button class="tool"><svg><use href="#machine"/></svg></button>
                <button class="tool"><svg><use href="#report"/></svg></button>
                <button class="tool"><svg><use href="#shopdoc"/></svg></button>
                <button class="tool"><svg><use href="#toollist"/></svg></button>
                <button class="tool"><svg><use href="#verifypath"/></svg></button>
                <button class="tool"><svg><use href="#listpath"/></svg></button>
                <button class="tool"><svg><use href="#machine"/></svg></button>
                <span class="rule"></span>
                <button class="tool"><svg><use href="#post"/></svg></button>
                <button class="tool"><svg><use href="#postmachine"/></svg></button>
                <button class="tool"><svg><use href="#docblue"/></svg></button>
                <button class="flyout"></button>
                <span class="rule full"></span>
                <span class="grip-h"></span>
                <button class="tool"><svg><use href="#meshnew"/></svg></button>
                <button class="tool"><svg><use href="#toolnew"/></svg></button>
                <button class="tool"><svg><use href="#globe"/></svg></button>
            </aside>

            <section class="navigator">
                <h2>工序导航器 - 程序顺序</h2>
                <div class="columns"></div>
                <ul class="tree">
                    <li class="group"><button class="toggle"></button><svg><use href="#warn"/></svg><svg><use href="#folder"/></svg><span>OP401</span></li>
                    <li class="op"><i class="elbow"></i><svg><use href="#warn"/></svg><svg><use href="#mill"/></svg><span>DD_COPY</span></li>
                    <li class="op done"><i class="elbow"></i><svg><use href="#warn"/></svg><svg><use href="#mill"/></svg><span>DD_COPY</span></li>
                    <li class="group"><button class="toggle"></button><svg><use href="#warn"/></svg><svg><use href="#folder"/></svg><span>OP402</span></li>
                    <li class="op"><i class="elbow"></i><svg><use href="#warn"/></svg><svg><use href="#mill"/></svg><span>ZK_COPY</span></li>
                    <li class="group"><button class="toggle"></button><svg><use href="#warn"/></svg><svg><use href="#folder"/></svg><span>OP403</span></li>
                    <li class="op"><i class="elbow"></i><svg><use href="#warn"/></svg><svg><use href="#mill"/></svg><span>ZK_COPY</span></li>
                    <li class="group"><button class="toggle"></button><svg><use href="#warn"/></svg><svg><use href="#folder"/></svg><span>OP404</span></li>
                    <li class="op selected"><i class="elbow"></i><svg><use href="#warn"/></svg><svg><use href="#turn"/></svg><span>LX_COPY</span></li>
                    <li class="group"><button class="toggle"></button><svg><use href="#warn"/></svg><svg><use href="#folder"/></svg><span>OP405</span></li>
                    <li class="op"><i class="elbow"></i><svg><use href="#warn"/></svg><svg><use href="#turn"/></svg><span>LX_COPY</span></li>
                    <li class="group"><button class="toggle"></button><svg><use href="#warn"/></svg><svg><use href="#folder"/></svg><span>OP406</span></li>
                    <li class="op"><i class="elbow"></i><svg><use href="#warn"/></svg><svg><use href="#turn"/></svg><span>DJ_COPY</span></li>
                    <li class="op done"><i class="elbow"></i><svg><use href="#warn"/></svg><svg><use href="#turn"/></svg><span>DJ_COPY</span></li>
                    <li class="op done"><i class="elbow"></i><svg><use href="#warn"/></svg><svg><use href="#turn"/></svg><span>DJ_COPY</span></li>
                    <li class="op done"><i class="elbow"></i><svg><use href="#warn"/></svg><svg><use href="#mill"/></svg><span>DD_COPY</span></li>
                    <li class="group"><button class="toggle"></button><svg><use href="#warn"/></svg><svg><use href="#folder"/></svg><span>OP407</span></li>
                    <li class="op"><i class="elbow"></i><svg><use href="#warn"/></svg><svg><use href="#turn"/></svg><span>GD_COPY</span></li>
                    <li class="group"><button class="toggle"></button><svg><use href="#warn"/></svg><svg><use href="#folder"/></svg><span>OP408</span></li>
                    <li class="op"><i class="elbow"></i><svg><use href="#warn"/></svg><svg><use href="#turn"/></svg><span>GD_COPY</span></li>
                    <li class="group"><i class="stub"></i><svg><use href="#ok"/></svg><svg><use href="#folder"/></svg><span>OP409</span></li>
                    <li class="group last"><i class="elbow"></i><svg><use href="#ok"/></svg><svg><use href="#folder"/></svg><span>OP410</span></li>
                    <li class="program"><button class="toggle"></button><svg><use href="#ok"/></svg><svg><use href="#folder"/></svg><span>试牙刀</span></li>
                    <li class="group"><button class="toggle"></button><svg><use href="#ok"/></svg><svg><use href="#folder"/></svg><span>OP11101</span></li>
                    <li class="op"><i class="elbow"></i><svg><use href="#ok"/></svg><svg><use href="#mill"/></svg><span>ZK_COPY</span></li>
                    <li class="group"><button class="toggle"></button><svg><use href="#ok"/></svg><svg><use href="#folder"/></svg><span>OP11102</span></li>
                    <li class="op"><i class="elbow"></i><svg><use href="#ok"/></svg><svg><use href="#turn"/></svg><span>LX_COPY</span></li>
                    <li class="group"><button class="toggle"></button><svg><use href="#ok"/></svg><svg><use href="#folder"/></svg><span>OP11103</span></li>
                    <li class="op"><i class="elbow"></i><svg><use href="#ok"/></svg><svg><use href="#turn"/></svg><span>DJ_COPY</span></li>
                    <li class="group"><button class="toggle"></button><svg><use href="#ok"/></svg><svg><use href="#folder"/></svg><span>OP11104</span></li>
                    <li class="op"><i class="elbow"></i><svg><use href="#ok"/></svg><svg><use href="#turn"/></svg><span>GD_COPY</span></li>
                    <li class="group"><button class="toggle"></button><svg><use href="#ok"/></svg><svg><use href="#folder"/></svg><span>OP11105</span></li>
                </ul>
            </section>
        </main>

        <form class="dialog">
            <div class="dialog-title">
                <svg><use href="#gear"/></svg>
                <h1>编辑边界</h1>
                <button type="button" class="close" aria-label="关闭"><svg viewBox="0 0 12 12"><path d="M1 1l10 10M11 1L1 11"/></svg></button>
            </div>
            <div class="dialog-body">
                <div class="field">
                    <label for="type">类型</label>
                    <div class="pick"><select id="type"><option>封闭的</option></select></div>
                </div>
                <div class="field">
                    <label for="plane">刨</label>
                    <div class="pick active">
                        <select id="plane"><option>用户定义</option></select>
                        <ul class="menu" role="listbox">
                            <li role="option" aria-selected="true">用户定义</li>
                            <li role="option">自动</li>
                        </ul>
                    </div>
                </div>
                <div class="field">
                    <span>材料侧</span>
                </div>
                <div class="field disabled">
                    <label for="geometry">几何体类型</label>
                    <div class="pick"><select id="geometry" disabled><option>部件</option></select></div>
                </div>
                <hr>
                <p class="caption">传播边界平面</p>
                <div class="pair">
                    <button type="button">选择</button>
                    <button type="button" disabled>完成</button>
                </div>
                <hr>
                <button type="button" class="wide-button">定制边界数据</button>
                <hr>
                <button type="button" class="wide-button">创建永久边界</button>
                <hr>
                <div class="pair">
                    <button type="button">编辑</button>
                    <button type="button">移除</button>
                    <button type="button">附加</button>
                    <button type="button">信息</button>
                </div>
                <button type="button" class="wide-button reselect">全部重选</button>
                <hr>
                <div class="pager">
                    <button type="button" aria-label="上一个"><svg viewBox="0 0 12 12"><path d="M11 0v12L1 6z"/></svg></button>
                    <button type="button" aria-label="下一个"><svg viewBox="0 0 12 12"><path d="M1 0v12l10-6z"/></svg></button>
                </div>
                <div class="actions">
                    <button type="button" class="primary">确定</button>
                    <button type="button">返回</button>
                    <button type="button">取消</button>
                </div>
            </div>
        </form>

        <div class="watermark">UG爱好者论坛@Armstrong123</div>
    </div>
</body>
</html>
```
FILE: styles.css
```css
* {
    box-sizing: border-box;
}

body {
    margin: 0;
    font-family: "Noto Sans", "Noto Sans CJK SC", sans-serif;
    font-size: 12px;
    color: #222;
    background-color: #fff;
}

button, select, input {
    font: inherit;
    color: inherit;
}

button {
    padding: 0;
    border: none;
    background: none;
}

ul {
    list-style: none;
    margin: 0;
    padding: 0;
}

.sprite {
    position: absolute;
    width: 0;
    height: 0;
}

symbol {
    fill: none;
    stroke: #b2b2b2;
}

.app {
    position: relative;
    display: flex;
    flex-direction: column;
    height: 100vh;
    overflow: hidden;
}

/* toolbars */
.bar {
    display: flex;
    align-items: center;
    height: 34px;
    overflow: hidden;
    border-bottom: 1px solid #dcdcdc;
}

.bar > * {
    flex: none;
}

.bar-standard {
    height: 28px;
    padding-left: 6px;
    align-items: flex-start;
}

.bar-view .tool:first-child {
    margin-left: -3px;
}

.bar-operation {
    width: 331px;
    border-right: 1px solid #dcdcdc;
}

.bar-operation .tool:first-child {
    margin-left: -11px;
}

.bar-selection {
    height: 32px;
    border-bottom: none;
}

.tool {
    display: flex;
    align-items: center;
    justify-content: center;
    width: 31px;
    height: 24px;
}

.tool svg {
    width: 24px;
    height: 24px;
}

.letter {
    font-family: "Liberation Serif", serif;
    font-size: 26px;
    font-weight: bold;
    line-height: 24px;
    color: #999;
}

.line-icon {
    fill: none;
    stroke: #b2b2b2;
}

.line-icon text {
    font-family: "Liberation Serif", serif;
    font-size: 17px;
    font-weight: bold;
    fill: #888;
    stroke: none;
}

.bar-selection .tool {
    width: 23px;
}

.bar-selection .tool svg {
    width: 17px;
    height: 17px;
}

.sep {
    width: 7px;
    height: 30px;
    background: linear-gradient(#d4d4d4, #d4d4d4) 3px 0 / 1px 100% no-repeat;
}

.bar-standard .sep {
    height: 26px;
}

.bar-operation .sep {
    width: 6px;
    height: 26px;
}

.bar-selection .sep {
    height: 24px;
}

.grip {
    width: 4px;
    height: 26px;
    background: repeating-linear-gradient(#a5a5a5 0 2px, transparent 2px 4px) 1px 0 / 2px 100% no-repeat;
}

.bar-standard .grip {
    height: 24px;
}

.drop {
    display: flex;
    align-items: center;
    justify-content: center;
    width: 10px;
    height: 22px;
}

.drop::after, .pick::after {
    content: "";
    border: 3px solid transparent;
    border-top-color: #111;
    border-bottom: none;
}

.drop.wide {
    width: 12px;
}

.drop.low {
    height: 24px;
    padding-top: 10px;
}

.more {
    display: flex;
    flex-direction: column;
    align-items: center;
    width: 14px;
    height: 24px;
    margin-left: 22px;
    font-size: 16px;
    line-height: 8px;
}

.more::after {
    content: "";
    margin-top: 6px;
    border: 3px solid transparent;
    border-top-color: #111;
    border-bottom: none;
}

.search {
    display: flex;
    align-items: center;
    width: 125px;
    height: 20px;
    margin: 1px 5px 0 3px;
    border: 1px solid #9a9a9a;
}

.search input {
    flex: 1;
    min-width: 0;
    padding: 0 1px;
    border: none;
    font-size: 11px;
    outline: none;
}

.search svg {
    width: 18px;
    height: 18px;
}

/* drop-downs */
.pick {
    position: relative;
    display: flex;
    align-items: center;
    height: 25px;
    background-color: #fff;
    border: 1px solid #a9a9a9;
}

.pick select {
    appearance: none;
    width: 100%;
    height: 100%;
    padding: 0 20px 0 4px;
    border: none;
    background: none;
    outline: none;
    opacity: 1;
}

.pick::after {
    position: absolute;
    right: 5px;
    border-width: 4px;
    border-bottom: none;
}

.layer-pick {
    width: 49px;
    height: 20px;
    margin: 1px 4px 0;
}

.layer-pick select {
    padding-left: 2px;
}

.filter-pick {
    width: 88px;
    height: 20px;
    margin: 0 3px 0 0;
    border-left: none;
}

.filter-pick::after {
    border-top-color: #999;
}

/* work area */
.workspace {
    flex: 1;
    display: flex;
    min-height: 0;
}

.viewport {
    flex: 1;
    min-width: 0;
    background: linear-gradient(#0683c3, #487f77);
}

.model {
    display: block;
    width: 100%;
    height: 100%;
}

.axis {
    font-family: "Liberation Sans", sans-serif;
    font-size: 12px;
}

.axis-x {
    fill: #d84a4a;
}

.axis-y {
    fill: #3a9c3a;
}

.axis-z {
    fill: #2b46e8;
}

.sidebar {
    display: flex;
    flex-direction: column;
    align-items: center;
    width: 35px;
    overflow: hidden;
    border-right: 1px solid #999;
    border-left: 1px solid #e4e4e4;
    background-color: #fcfcfc;
}

.sidebar > * {
    flex: none;
}

.sidebar .tool {
    height: 31px;
}

.rule {
    width: 26px;
    height: 1px;
    margin: 2px 0;
    background-color: #ccc;
}

.rule.full {
    width: 100%;
}

.grip-h {
    width: 26px;
    height: 2px;
    margin: 5px 0;
    background: repeating-linear-gradient(90deg, #a5a5a5 0 2px, transparent 2px 4px);
}

.flyout {
    align-self: flex-start;
    margin-left: 7px;
    height: 12px;
}

.flyout::after {
    content: "";
    display: block;
    border: 3px solid transparent;
    border-right: 4px solid #111;
    border-left: none;
}

.navigator {
    width: 151px;
    padding-left: 12px;
    border-top: 1px solid #999;
    overflow: hidden;
}

.navigator h2 {
    margin: 0;
    padding-left: 23px;
    font-size: 12px;
    font-weight: normal;
    line-height: 28px;
    white-space: nowrap;
}

.columns {
    height: 22px;
    background-color: #ececec;
    border-top: 1px solid #ccc;
    border-bottom: 1px solid #ccc;
}

.tree {
    border-left: 1px solid #b5b5b5;
}

.tree li {
    --dots: repeating-linear-gradient(#999 0 1px, transparent 1px 2px);
    display: flex;
    align-items: center;
    height: 20px;
    border-bottom: 1px solid #e6e6e6;
    white-space: nowrap;
    background: var(--dots) 8px 0 / 1px 100% no-repeat, var(--dots) 27px 0 / 1px 100% no-repeat;
}

.tree li > * {
    flex: none;
}

.tree li:nth-child(even) {
    background-color: #fafafa;
}

.tree .group {
    padding-left: 18px;
}

.tree .op {
    padding-left: 37px;
    color: #5a35a8;
}

.tree .program, .tree .last {
    background: var(--dots) 8px 0 / 1px 100% no-repeat;
}

.tree .done {
    color: #222;
}

.tree svg {
    width: 16px;
    height: 16px;
    margin-right: 1px;
}

.tree span {
    padding-left: 1px;
    line-height: 19px;
}

.tree .op svg {
    margin-right: 0;
}

.tree .op span {
    padding-left: 3px;
}

.tree .selected span {
    color: #fff;
    background-color: #3399ff;
}

.toggle {
    width: 9px;
    height: 9px;
    margin: 0 6px 0 4px;
    background: linear-gradient(#222, #222) center / 5px 1px no-repeat #fff;
    border: 1px solid #aaa;
}

.elbow, .stub {
    align-self: flex-start;
    width: 10px;
    height: 10px;
    margin-left: 9px;
    border-bottom: 1px dotted #999;
}

.elbow {
    border-left: 1px dotted #999;
}

/* dialog */
.dialog {
    position: absolute;
    top: 46px;
    right: 69px;
    width: 328px;
    background-color: #e8e8e8;
    border: 1px solid #b4b4b4;
    border-top: none;
}

.dialog-title {
    display: flex;
    align-items: center;
    height: 24px;
    margin: 0 -1px;
    padding: 0 9px 0 8px;
    gap: 9px;
    color: #fff;
    background-color: #5c8880;
}

.dialog-title svg {
    width: 15px;
    height: 15px;
}

.dialog-title h1 {
    flex: 1;
    margin: 0;
    font-size: 13px;
    font-weight: normal;
    line-height: 20px;
}

.dialog-title .close svg {
    display: block;
    width: 12px;
    height: 12px;
    stroke: #fff;
    stroke-width: 2;
}

.dialog-body {
    padding: 7px 9px 10px;
}

.field {
    display: flex;
    align-items: center;
    justify-content: space-between;
    height: 27px;
}

.disabled, .disabled select {
    color: #a5a5a5;
}

.disabled .pick::after {
    border-top-color: #aaa;
}

.active {
    z-index: 1;
}

.active::after {
    border-top-color: #2d7f96;
}

.menu {
    position: absolute;
    top: 24px;
    left: -1px;
    right: -1px;
    border: 1px solid #a9a9a9;
    background-color: #fff;
}

.menu li {
    padding-left: 2px;
    line-height: 19px;
}

.menu li[aria-selected="true"] {
    color: #fff;
    background-color: #3399ff;
}

.dialog hr {
    height: 1px;
    margin: 2px 0 3px;
    border: none;
    background-color: #d0d0d0;
}

.dialog .caption {
    margin: 0;
    line-height: 22px;
}

.pair {
    display: grid;
    grid-template-columns: 1fr 1fr;
    gap: 2px;
    padding: 0 2px 2px 0;
}

.pair button, .wide-button {
    height: 29px;
    padding-bottom: 2px;
    border: 1px solid #a9a9a9;
}

.pair button:disabled {
    color: #aaa;
    border-color: #ccc;
}

.wide-button {
    display: block;
    width: 100%;
}

.reselect {
    margin-top: 2px;
}

.pager {
    display: flex;
    justify-content: space-between;
}

.pager button {
    display: flex;
    align-items: center;
    justify-content: center;
    width: 23px;
    height: 23px;
    border: 1px solid #a9a9a9;
}

.pager svg {
    width: 12px;
    height: 12px;
    fill: #000;
}

.actions {
    display: flex;
    justify-content: flex-end;
    gap: 5px;
    margin: 12px 6px 0 0;
}

.actions button {
    width: 54px;
    height: 25px;
    background-color: #c9cacd;
    border: 1px solid #a9a9a9;
}

.actions .primary {
    background-color: #9acbe6;
    border-color: #5e99bb;
}

.watermark {
    position: absolute;
    right: 4px;
    bottom: 2px;
    font-family: "Liberation Serif", "Noto Sans CJK SC", serif;
    font-size: 15px;
    line-height: 20px;
    color: #eee;
    text-shadow: 1px 1px 1px #333, 0 0 1px #555;
    pointer-events: none;
}
```
